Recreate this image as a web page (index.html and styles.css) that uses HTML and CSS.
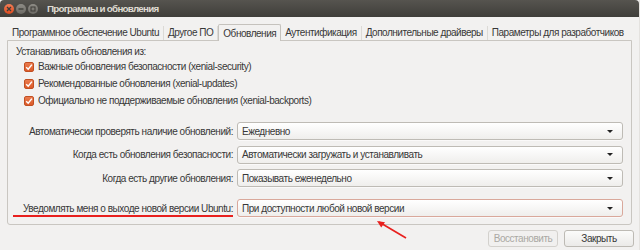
FILE: index.html
```html
<!DOCTYPE html>
<html lang="ru">
<head>
<meta charset="utf-8">
<link rel="stylesheet" href="styles.css">
</head>
<body>
<div class="window">
  <div class="titlebar">
    <div class="wbtns">
      <span class="wb close"><svg width="6" height="6" viewBox="0 0 6 6"><path d="M1 1L5 5M5 1L1 5" stroke="#3c3b37" stroke-width="1.3"/></svg></span>
      <span class="wb min"><svg width="6" height="6" viewBox="0 0 6 6"><path d="M0.5 3H5.5" stroke="#3c3b37" stroke-width="1.3"/></svg></span>
      <span class="wb max"><svg width="6" height="6" viewBox="0 0 6 6"><rect x="1" y="1" width="4" height="4" fill="none" stroke="#3c3b37" stroke-width="1"/></svg></span>
    </div>
    <div class="title">Программы и обновления</div>
  </div>
  <div class="tabs">
    <div class="tab">Программное обеспечение Ubuntu</div>
    <div class="tab">Другое ПО</div>
    <div class="tab active">Обновления</div>
    <div class="tab">Аутентификация</div>
    <div class="tab">Дополнительные драйверы</div>
    <div class="tab last">Параметры для разработчиков</div>
  </div>
  <div class="frame">
    <div class="heading">Устанавливать обновления из:</div>
    <div class="checks">
      <div class="check"><span class="cb"><svg width="8" height="8" viewBox="0 0 8 8"><path d="M1.2 4.2L3.2 6.2L6.9 1.6" fill="none" stroke="#fff" stroke-width="1.5"/></svg></span>Важные обновления безопасности (xenial-security)</div>
      <div class="check"><span class="cb"><svg width="8" height="8" viewBox="0 0 8 8"><path d="M1.2 4.2L3.2 6.2L6.9 1.6" fill="none" stroke="#fff" stroke-width="1.5"/></svg></span>Рекомендованные обновления (xenial-updates)</div>
      <div class="check"><span class="cb"><svg width="8" height="8" viewBox="0 0 8 8"><path d="M1.2 4.2L3.2 6.2L6.9 1.6" fill="none" stroke="#fff" stroke-width="1.5"/></svg></span>Официально не поддерживаемые обновления (xenial-backports)</div>
    </div>
    <div class="grid">
      <div class="lbl">Автоматически проверять наличие обновлений:</div>
      <div class="combo"><span>Ежедневно</span><i class="arr"></i></div>
      <div class="lbl">Когда есть обновления безопасности:</div>
      <div class="combo"><span>Автоматически загружать и устанавливать</span><i class="arr"></i></div>
      <div class="lbl">Когда есть другие обновления:</div>
      <div class="combo"><span>Показывать еженедельно</span><i class="arr"></i></div>
      <div class="lbl notify">Уведомлять меня о выходе новой версии Ubuntu:</div>
      <div class="combo focus notify"><span>При доступности любой новой версии</span><i class="arr"></i></div>
    </div>
  </div>
  <div class="buttons">
    <div class="btn disabled">Восстановить</div>
    <div class="btn">Закрыть</div>
  </div>
  <svg class="arrow" width="34" height="22" viewBox="0 0 34 22">
    <path d="M31 19L4 3" stroke="#e8201e" stroke-width="1.6" fill="none"/>
    <path d="M2 2L10 3.2L6.2 8.6Z" fill="#e8201e"/>
  </svg>
</div>
</body>
</html>
```

FILE: styles.css
```css
* { box-sizing: border-box; }
html, body { margin: 0; padding: 0; }
body {
  width: 640px;
  height: 250px;
  overflow: hidden;
  background: #f2f1f0;
  font-family: "Liberation Sans", Arial, sans-serif;
  font-size: 10px;
  letter-spacing: -0.45px;
  color: #383838;
}
.window {
  position: relative;
  width: 640px;
  height: 250px;
  background: #f2f1f0;
  border-right: 1px solid #e4e2df;
}
.titlebar {
  height: 17px;
  display: flex;
  align-items: center;
  background: linear-gradient(#56544f, #3f3e3a);
  border-radius: 4px 4px 0 0;
  padding-left: 4px;
}
.wbtns { display: flex; gap: 2px; }
.wb {
  width: 10px; height: 10px; border-radius: 50%;
  display: flex; align-items: center; justify-content: center;
  background: linear-gradient(#8e8c86, #6b6964);
}
.wb.close { background: linear-gradient(#f27d56, #dc4a1e); }
.wb svg { display: block; }
.title {
  margin-left: 9px;
  color: #dfdbd2;
  font-weight: bold;
  font-size: 9.8px;
  letter-spacing: -0.75px;
}
.tabs {
  display: flex;
  margin: 6px 0 0 8px;
  height: 17px;
  align-items: flex-end;
}
.tab {
  height: 14px;
  line-height: 13px;
  padding: 0 4px;
  border-right: 1px solid #dcdad6;
  white-space: nowrap;
  letter-spacing: -0.47px;
}
.tab.last { border-right: none; }
.tab.active {
  height: 17px;
  line-height: 17px;
  background: #f2f1f0;
  border: 1px solid #c5c2bd;
  border-bottom: none;
  margin-bottom: -1px;
  position: relative;
  z-index: 1;
  border-radius: 2px 2px 0 0;
}
.frame {
  margin: 0 7px 0 7px;
  height: 185px;
  border: 1px solid #c9c6c1;
  border-radius: 0 0 3px 3px;
  padding: 4px 8px 0 8px;
}
.heading { height: 14px; line-height: 14px; }
.checks { margin: -1px 0 0 8px; }
.check {
  height: 17px;
  display: flex;
  align-items: center;
}
.cb {
  width: 10px; height: 10px;
  border-radius: 2px;
  background: linear-gradient(#ea7b4e, #db5a28);
  border: 1px solid #c14f22;
  margin-right: 4px;
  display: flex; align-items: center; justify-content: center;
}
.cb svg { display: block; }
.grid {
  margin-top: 13px;
  display: grid;
  grid-template-columns: 217px 1fr;
  column-gap: 4px;
  row-gap: 5.5px;
  align-items: center;
}
.lbl { text-align: right; white-space: nowrap; }
.combo {
  height: 18px;
  border: 1px solid #bebbb5;
  border-radius: 3px;
  background: linear-gradient(#ffffff, #efeeec);
  display: flex;
  align-items: center;
  justify-content: space-between;
  padding: 0 9px 0 4px;
  box-shadow: 0 1px 0 rgba(255,255,255,0.6);
}
.combo.focus { border-color: #d9a89b; }
.combo.notify { margin-top: 6.5px; }
.lbl.notify {
  margin-top: 6.5px;
  position: relative;
}
.lbl.notify::after {
  content: "";
  position: absolute;
  left: -3px; right: 0;
  bottom: -3px;
  height: 1.5px;
  background: #e8201e;
}
.arr {
  width: 0; height: 0;
  border-left: 3px solid transparent;
  border-right: 3px solid transparent;
  border-top: 3px solid #222;
}
.buttons {
  display: flex;
  justify-content: flex-end;
  gap: 6px;
  margin: 5px 5px 0 0;
}
.btn {
  height: 17px;
  line-height: 15px;
  border: 1px solid #bdbab4;
  border-radius: 3px;
  background: linear-gradient(#fbfbfa, #ebeae8);
  text-align: center;
  padding: 0 4px;
  width: 70px;
}
.btn.disabled { color: #aaa8a3; background: #f1f0ef; border-color: #d3d1cd; }
.arrow {
  position: absolute;
  left: 375px;
  top: 219px;
}
```
